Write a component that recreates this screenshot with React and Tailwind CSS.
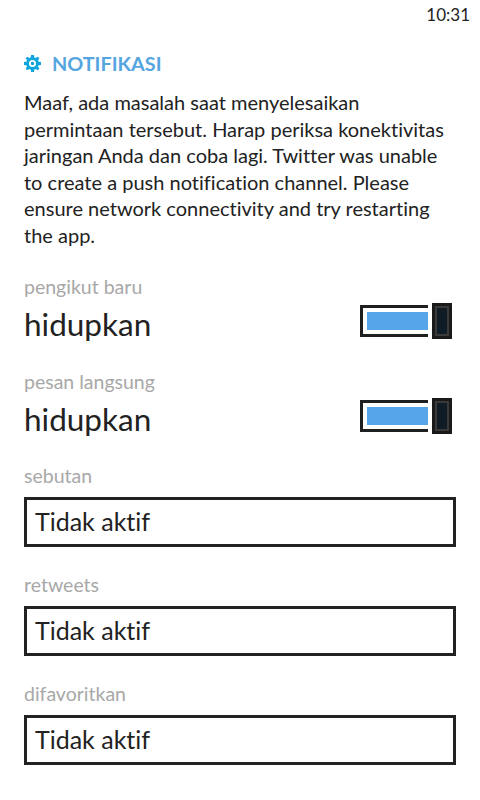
import React from 'react'

function Gear(){
  return (
    <svg width="17" height="17" viewBox="0 0 24 24" className="shrink-0">
      <path fill="#0ea5dc" fillRule="evenodd" d="M10 0h4l.6 3.4 2 .8L19.5 2.3l2.2 2.2-1.9 2.9.8 2 3.4.6v4l-3.4.6-.8 2 1.9 2.9-2.2 2.2-2.9-1.9-2 .8L14 24h-4l-.6-3.4-2-.8-2.9 1.9-2.2-2.2 1.9-2.9-.8-2L0 14v-4l3.4-.6.8-2-1.9-2.9 2.2-2.2 2.9 1.9 2-.8zM12 7a5 5 0 100 10 5 5 0 000-10zm0 2.6a2.4 2.4 0 110 4.8 2.4 2.4 0 010-4.8z"/>
    </svg>
  )
}

function Toggle(){
  return (
    <div className="flex items-center mr-[4px] -mt-[7px]">
      <div className="w-[68px] h-[32px] border-[3px] border-r-0 border-[#1f1f1f] pl-[4px] py-[4px]">
        <div className="h-full bg-[#55a5e8]"></div>
      </div>
      <div className="ml-[4px] w-[20px] h-[36px] border-[3px] border-[#1a1a1a] bg-[#3a3a3a] p-[2px]">
        <div className="h-full bg-[#0f1c26]"></div>
      </div>
    </div>
  )
}

function ToggleRow({label, mt}){
  return (
    <div className={mt}>
      <div className="text-[19.5px] leading-[24px] text-[#a8a8a8]">{label}</div>
      <div className="flex items-center justify-between mt-[5px] h-[40px]">
        <span className="text-[31.5px] leading-[40px] text-[#222]">hidupkan</span>
        <Toggle />
      </div>
    </div>
  )
}

function SelectRow({label, mt}){
  return (
    <div className={mt}>
      <div className="text-[19.5px] leading-[24px] text-[#a8a8a8]">{label}</div>
      <div className="mt-[9px] h-[50px] border-[3px] border-[#222] flex items-center pl-[8px] text-[25px] text-[#222]">Tidak aktif</div>
    </div>
  )
}

export default function App(){
  return (
    <div className="w-[480px] h-[800px] bg-white overflow-hidden px-[24px] font-['Lato',sans-serif] [font-variant-ligatures:none]">
      <div className="flex justify-end pt-[3px] -mr-[14px] h-[51px]">
        <span className="text-[17px] leading-[24px] text-[#222]">10:31</span>
      </div>
      <div className="flex items-center gap-[11px] h-[24px]">
        <Gear />
        <span className="text-[19.8px] leading-[24px] font-bold text-[#55a5e0]">NOTIFIKASI</span>
      </div>
      <p className="mt-[14px] text-[20px] leading-[26.5px] text-[#222]">
        Maaf, ada masalah saat menyelesaikan permintaan tersebut. Harap periksa konektivitas jaringan Anda dan coba lagi. Twitter was unable to create a push notification channel. Please ensure network connectivity and try restarting the app.
      </p>
      <ToggleRow label="pengikut baru" mt="mt-[27px]" />
      <ToggleRow label="pesan langsung" mt="mt-[26px]" />
      <SelectRow label="sebutan" mt="mt-[25px]" />
      <SelectRow label="retweets" mt="mt-[26px]" />
      <SelectRow label="difavoritkan" mt="mt-[26px]" />
    </div>
  )
}
